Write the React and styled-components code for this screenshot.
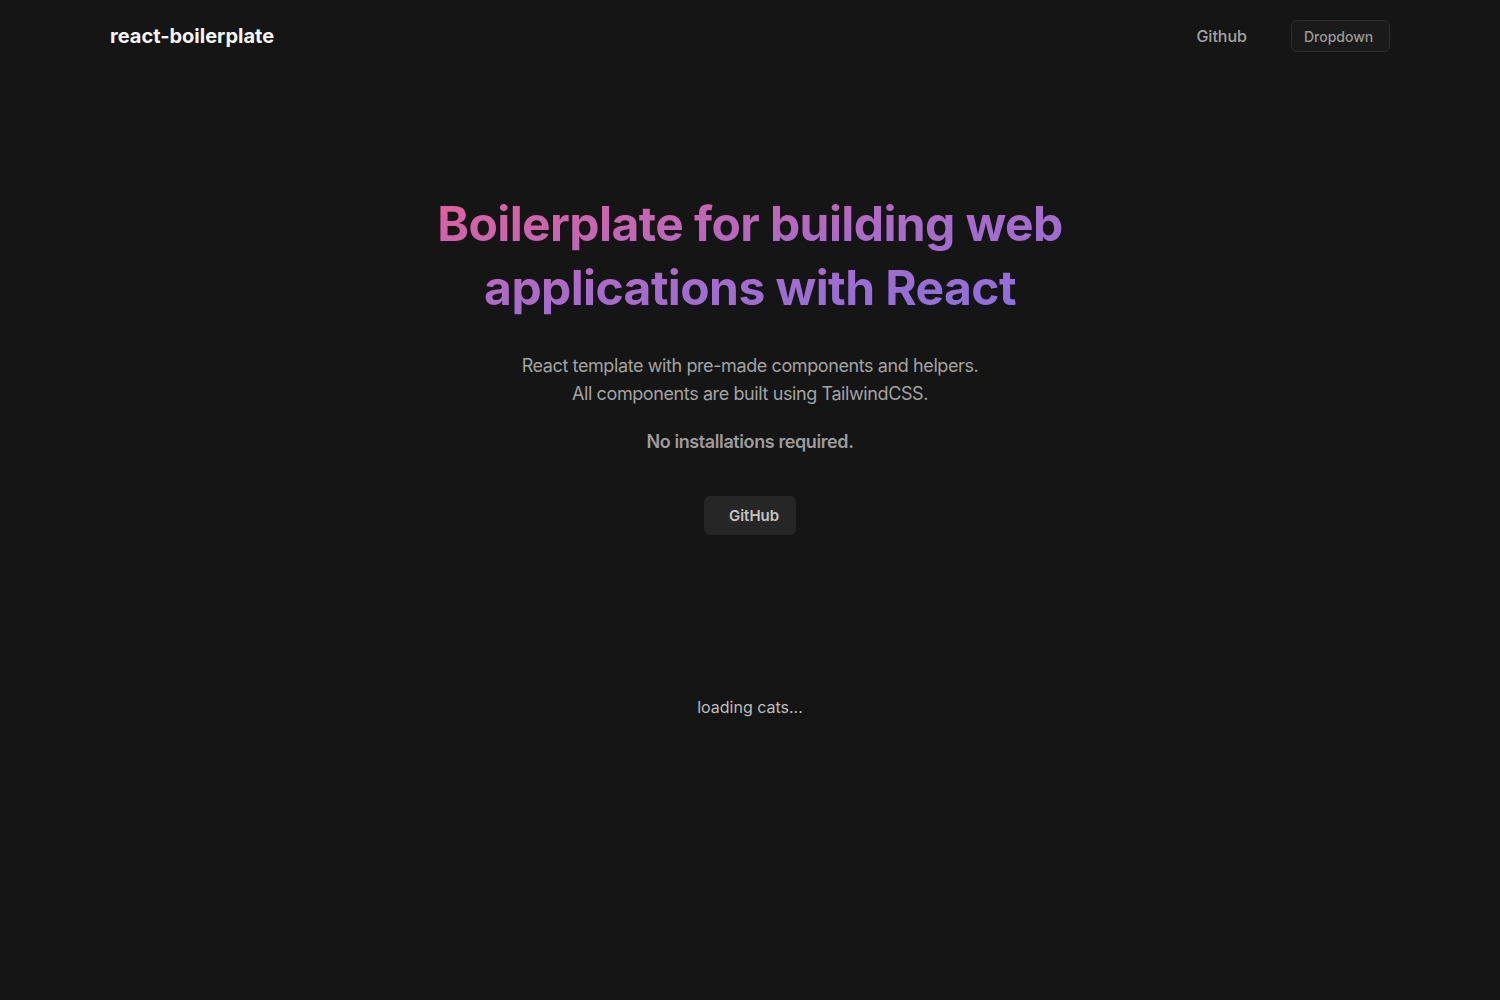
import styled, { createGlobalStyle } from 'styled-components'

const GlobalStyle = createGlobalStyle`
    html, body {
        margin: 0;
        background-color: #151515;
        font-family: Inter, "Noto Sans", sans-serif;
        -webkit-font-smoothing: antialiased;
    }
`

const Page = styled.div`
    min-height: 1000px;
    background-color: #151515;
    color: #e5e5e5;
`

const Header = styled.header`
    max-width: 1280px;
    margin: 0 auto;
    height: 72px;
    display: flex;
    align-items: center;
    justify-content: space-between;
`

const Logo = styled.a`
    font-size: 20px;
    font-weight: 700;
    color: #f5f5f5;
    text-decoration: none;
`

const Nav = styled.nav`
    display: flex;
    align-items: center;
    gap: 44px;
`

const NavLink = styled.a`
    font-size: 16px;
    font-weight: 500;
    color: #a3a3a3;
    text-decoration: none;
`

const DropdownButton = styled.button`
    height: 32px;
    width: 99px;
    padding: 0 16px 0 12px;
    border: 1px solid #2e2e2e;
    border-radius: 6px;
    background-color: #1a1a1a;
    color: #9a9a9a;
    font-family: inherit;
    font-size: 14px;
    font-weight: 500;
`

const Hero = styled.main`
    display: flex;
    flex-direction: column;
    align-items: center;
    text-align: center;
    padding-top: 120px;
`

const Title = styled.h1`
    margin: 0;
    max-width: 672px;
    font-size: 48px;
    line-height: 64px;
    font-weight: 700;
    letter-spacing: -0.6px;
    background: linear-gradient(to bottom right, #e85f96 0%, #aa6bc8 50%, #8572e2 100%);
    -webkit-background-clip: text;
    background-clip: text;
    color: transparent;
`

const Lead = styled.p`
    margin: ${({ $top }) => $top || 0}px 0 0;
    font-size: 18px;
    line-height: 28px;
    letter-spacing: -0.4px;
    font-weight: ${({ $bold }) => ($bold ? 600 : 400)};
    color: ${({ $bold }) => ($bold ? '#9c9c9c' : '#a3a3a3')};
`

const GithubButton = styled.a`
    margin-top: 40px;
    height: 39px;
    display: inline-flex;
    align-items: center;
    padding: 0 17px 0 25px;
    border-radius: 6px;
    background-color: #262626;
    color: #c4c4c4;
    font-size: 15px;
    font-weight: 600;
    text-decoration: none;
`

const Loading = styled.p`
    margin: 160px 0 0;
    font-size: 16px;
    line-height: 24px;
    color: #bdbdbd;
`

const App = () => {
    return (
        <Page>
            <GlobalStyle />
            <Header>
                <Logo href="#">react-boilerplate</Logo>
                <Nav>
                    <NavLink href="#">Github</NavLink>
                    <DropdownButton>Dropdown</DropdownButton>
                </Nav>
            </Header>
            <Hero>
                <Title>Boilerplate for building web applications with React</Title>
                <Lead $top={32}>
                    React template with pre-made components and helpers.
                    <br />
                    All components are built using TailwindCSS.
                </Lead>
                <Lead $top={20} $bold>No installations required.</Lead>
                <GithubButton href="#">GitHub</GithubButton>
                <Loading>loading cats...</Loading>
            </Hero>
        </Page>
    )
}

export default App
